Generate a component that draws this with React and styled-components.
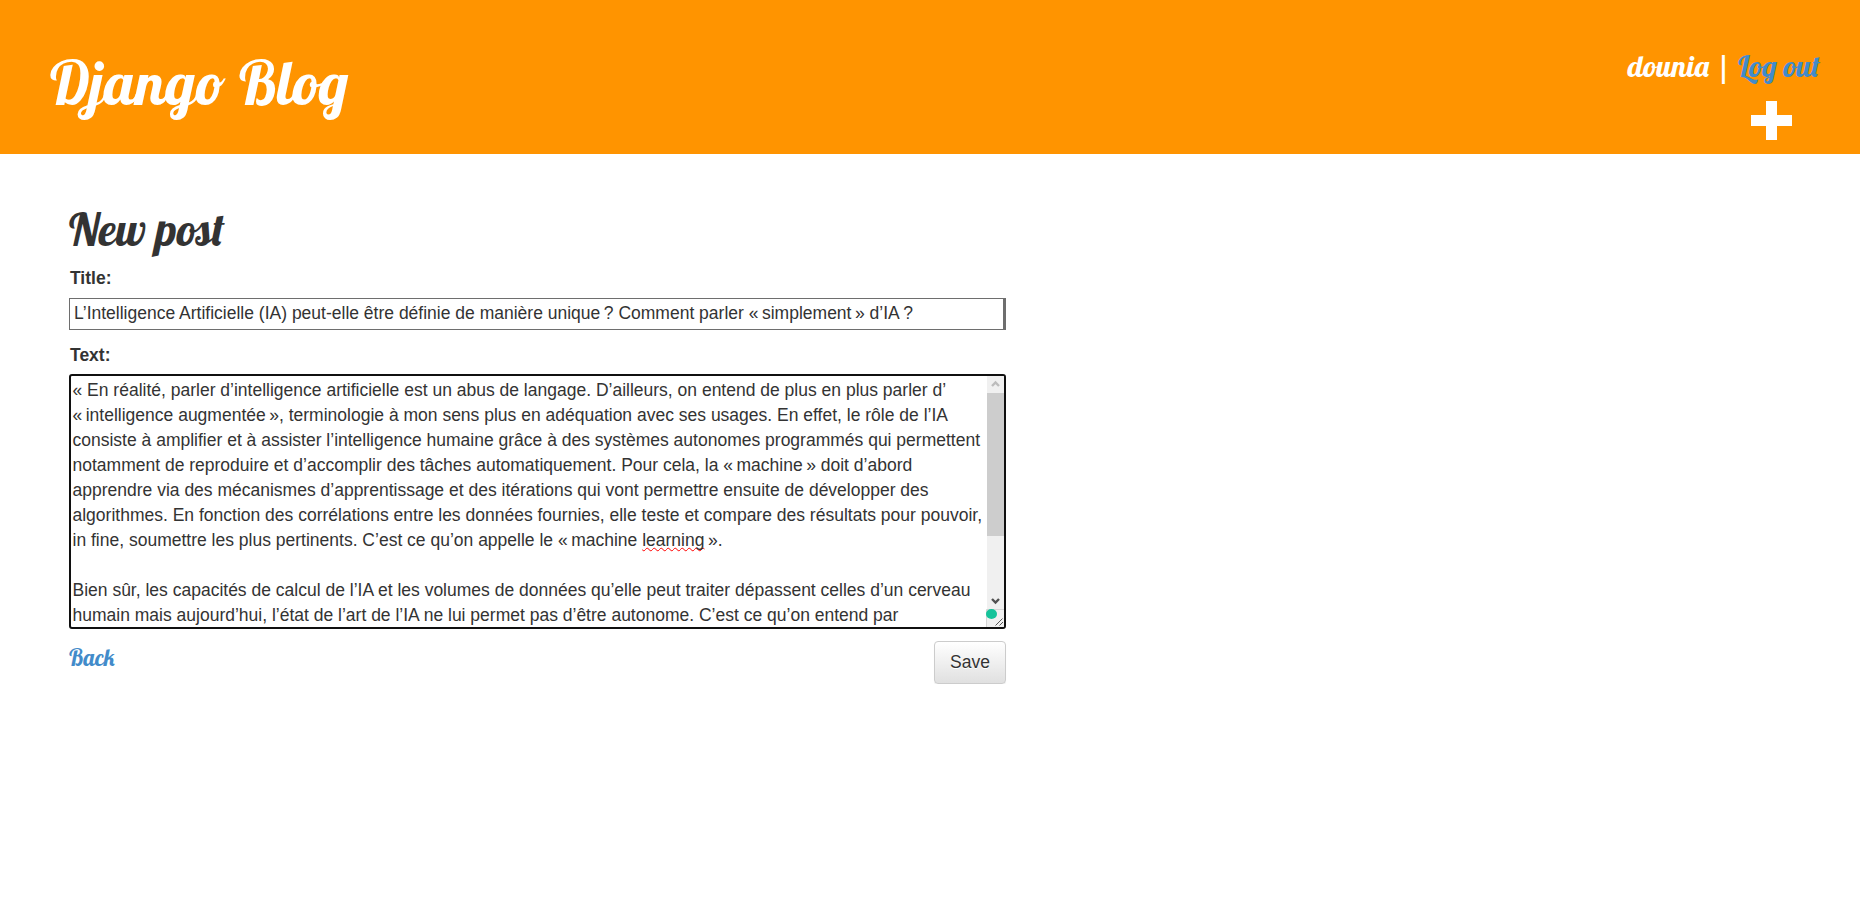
import React from "react";
import styled, { createGlobalStyle } from "styled-components";

const GlobalStyle = createGlobalStyle`
  *, *::before, *::after { box-sizing: border-box; }
  body {
    margin: 0;
    background: #fff;
    color: #333;
    font: 17.5px/25px "Liberation Sans", Arial, sans-serif;
  }
`;

const Header = styled.header`
  display: flex;
  justify-content: space-between;
  align-items: flex-start;
  height: 154px;
  padding: 43px 40px 0 50px;
  background: #ff9400;
  color: #fff;
`;

const Script = styled.span`
  display: block;
  font-family: Lobster, "Liberation Serif", serif;
  font-weight: 400;
  font-size: ${(p) => p.$size}px;
  line-height: ${(p) => p.$line}px;
  white-space: nowrap;
`;

const SiteTitle = styled.h1`
  margin: 0;
`;

const Account = styled.div`
  display: flex;
  flex-direction: column;
  align-items: flex-end;
  padding-top: 3px;
`;

const LinkText = styled.a`
  color: #428bca;
  text-decoration: none;
`;

const PlusIcon = styled.svg`
  display: block;
  margin: 15px 28px 0 0;
`;

const Main = styled.main`
  width: 937px;
  margin: 43px 0 0 69px;
`;

const PageTitle = styled.h2`
  margin: 0;
`;

const Label = styled.label`
  display: block;
  margin: ${(p) => p.$top}px 0 0 1px;
  font-weight: 700;
`;

const TextInput = styled.div`
  height: 32px;
  margin-top: 7px;
  padding: 2px 4px;
  border: 1px solid #6e6e6e;
  border-right-width: 3px;
  white-space: pre;
`;

const TextArea = styled.div`
  display: flex;
  height: 255px;
  margin-top: 6px;
  border: 2px solid #101010;
  border-radius: 3px;
  overflow: hidden;
`;

const Lines = styled.div`
  flex: 1;
  min-width: 0;
  padding: 2px 0 0 1.5px;
`;

const Line = styled.div`
  height: 25px;
  white-space: pre;
`;

const Misspelled = styled.span`
  text-decoration: underline wavy #f00 1.3px;
  text-decoration-skip-ink: none;
  text-underline-offset: 1px;
`;

const Scrollbar = styled.div`
  display: flex;
  flex: none;
  flex-direction: column;
  width: 17px;
  background: #f0f0f0;
`;

const Thumb = styled.div`
  height: 143px;
  background: #cdcdcd;
`;

const Spacer = styled.div`
  flex: 1;
`;

const ArrowIcon = styled.svg`
  display: block;
  fill: none;
  stroke: ${(p) => p.$color};
  stroke-width: 2.4;
`;

const Corner = styled.svg`
  display: block;
  overflow: visible;
`;

const Actions = styled.div`
  display: flex;
  justify-content: space-between;
  align-items: flex-start;
  margin-top: 12px;
`;

const SaveButton = styled.button`
  width: 72px;
  height: 43px;
  padding: 0;
  border: 1px solid #ccc;
  border-radius: 4px;
  background: linear-gradient(#fff, #e0e0e0);
  box-shadow: inset 0 1px 0 rgba(255, 255, 255, 0.15), 0 1px 1px rgba(0, 0, 0, 0.075);
  color: #333;
  font: 17.5px/25px "Liberation Sans", Arial, sans-serif;
  text-shadow: 0 1px 0 #fff;
`;

const paragraphs = [
  "« En réalité, parler d’intelligence artificielle est un abus de langage. D’ailleurs, on entend de plus en plus parler d’",
  "«\u202fintelligence augmentée\u202f», terminologie à mon sens plus en adéquation avec ses usages. En effet, le rôle de l’IA",
  "consiste à amplifier et à assister l’intelligence humaine grâce à des systèmes autonomes programmés qui permettent",
  "notamment de reproduire et d’accomplir des tâches automatiquement. Pour cela, la «\u202fmachine\u202f» doit d’abord",
  "apprendre via des mécanismes d’apprentissage et des itérations qui vont permettre ensuite de développer des",
  "algorithmes. En fonction des corrélations entre les données fournies, elle teste et compare des résultats pour pouvoir,",
  <>in fine, soumettre les plus pertinents. C’est ce qu’on appelle le «{"\u202f"}machine <Misspelled>learning</Misspelled>{"\u202f"}».</>,
  "",
  "Bien sûr, les capacités de calcul de l’IA et les volumes de données qu’elle peut traiter dépassent celles d’un cerveau",
  "humain mais aujourd’hui, l’état de l’art de l’IA ne lui permet pas d’être autonome. C’est ce qu’on entend par",
];

export default function App() {
  return (
    <>
      <GlobalStyle />
      <Header>
        <SiteTitle>
          <Script $size={60} $line={80}>Django Blog</Script>
        </SiteTitle>
        <Account>
          <Script $size={30} $line={40}>
            dounia | <LinkText href="#logout">Log out</LinkText>
          </Script>
          <PlusIcon width="41" height="39" viewBox="0 0 41 39" fill="#fff">
            <path d="M15 0h11v14h15v11H26v14H15V25H0V14h15z" />
          </PlusIcon>
        </Account>
      </Header>
      <Main>
        <PageTitle>
          <Script $size={45} $line={64}>New post</Script>
        </PageTitle>
        <Label $top={5}>Title:</Label>
        <TextInput>
          L’Intelligence Artificielle (IA) peut-elle être définie de manière unique{"\u202f"}? Comment parler «{"\u202f"}simplement{"\u202f"}» d’IA{"\u202f"}?
        </TextInput>
        <Label $top={13}>Text:</Label>
        <TextArea>
          <Lines>
            {paragraphs.map((line, i) => (
              <Line key={i}>{line}</Line>
            ))}
          </Lines>
          <Scrollbar>
            <ArrowIcon $color="#bcbcbc" width="17" height="17" viewBox="0 0 17 17">
              <path d="M5 10l3.500-3.500L12 10" />
            </ArrowIcon>
            <Thumb />
            <Spacer />
            <ArrowIcon $color="#505050" width="17" height="17" viewBox="0 0 17 17">
              <path d="M5 7l3.500 3.500L12 7" />
            </ArrowIcon>
            <Corner width="17" height="18" viewBox="0 0 17 18">
              <path d="M-.5 18V.5H17" fill="none" stroke="#d5d5d5" />
              <path d="M8.500 16.500l7-7M12.500 16.500l3.500-3.500" stroke="#555" fill="none" />
              <ellipse cx="4.500" cy="5" rx="5.500" ry="5" fill="#15c39a" />
            </Corner>
          </Scrollbar>
        </TextArea>
        <Actions>
          <LinkText href="#back">
            <Script $size={22.5} $line={33}>Back</Script>
          </LinkText>
          <SaveButton type="button">Save</SaveButton>
        </Actions>
      </Main>
    </>
  );
}
